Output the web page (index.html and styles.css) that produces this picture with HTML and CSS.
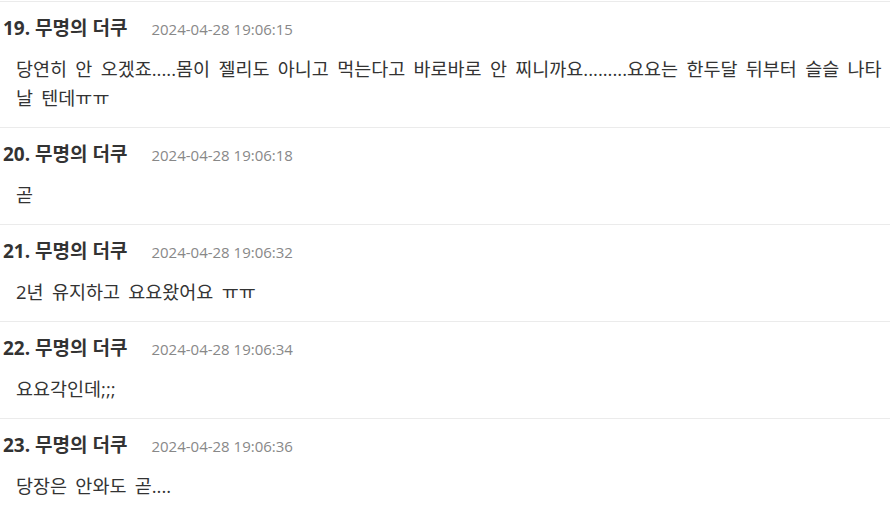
FILE: index.html
```html
<!DOCTYPE html>
<html lang="ko">
<head>
<meta charset="utf-8">
<link rel="stylesheet" href="styles.css">
</head>
<body>
<ul class="comments">
  <li class="comment">
    <div class="meta"><span class="name">19. 무명의 더쿠</span><span class="date">2024-04-28 19:06:15</span></div>
    <p class="text">당연히 안 오겠죠.....몸이 젤리도 아니고 먹는다고 바로바로 안 찌니까요.........요요는 한두달 뒤부터 슬슬 나타날 텐데ㅠㅠ</p>
  </li>
  <li class="comment">
    <div class="meta"><span class="name">20. 무명의 더쿠</span><span class="date">2024-04-28 19:06:18</span></div>
    <p class="text">곧</p>
  </li>
  <li class="comment">
    <div class="meta"><span class="name">21. 무명의 더쿠</span><span class="date">2024-04-28 19:06:32</span></div>
    <p class="text">2년 유지하고 요요왔어요 ㅠㅠ</p>
  </li>
  <li class="comment">
    <div class="meta"><span class="name">22. 무명의 더쿠</span><span class="date">2024-04-28 19:06:34</span></div>
    <p class="text">요요각인데;;;</p>
  </li>
  <li class="comment">
    <div class="meta"><span class="name">23. 무명의 더쿠</span><span class="date">2024-04-28 19:06:36</span></div>
    <p class="text">당장은 안와도 곧....</p>
  </li>
</ul>
</body>
</html>
```

FILE: styles.css
```css
html, body {
  margin: 0;
  padding: 0;
  background: #fff;
}
body {
  font-family: "Open Sans", "Noto Sans CJK KR", sans-serif;
  color: #333;
}
.comments {
  list-style: none;
  margin: 0;
  padding: 1px 0 0;
}
.comment {
  border-top: 1px solid #ebebeb;
  padding: 14px 0 15px 3px;
}
.meta {
  display: flex;
  align-items: baseline;
  gap: 24px;
  height: 25px;
  line-height: 25px;
}
.name {
  font-size: 19px;
  font-weight: 700;
  color: #333;
}
.date {
  font-size: 15px;
  color: #888;
}
.text {
  margin: 13px 0 0;
  padding: 0 4px 0 13px;
  font-size: 18.5px;
  line-height: 29px;
  word-spacing: 3.5px;
  color: #333;
}
```
